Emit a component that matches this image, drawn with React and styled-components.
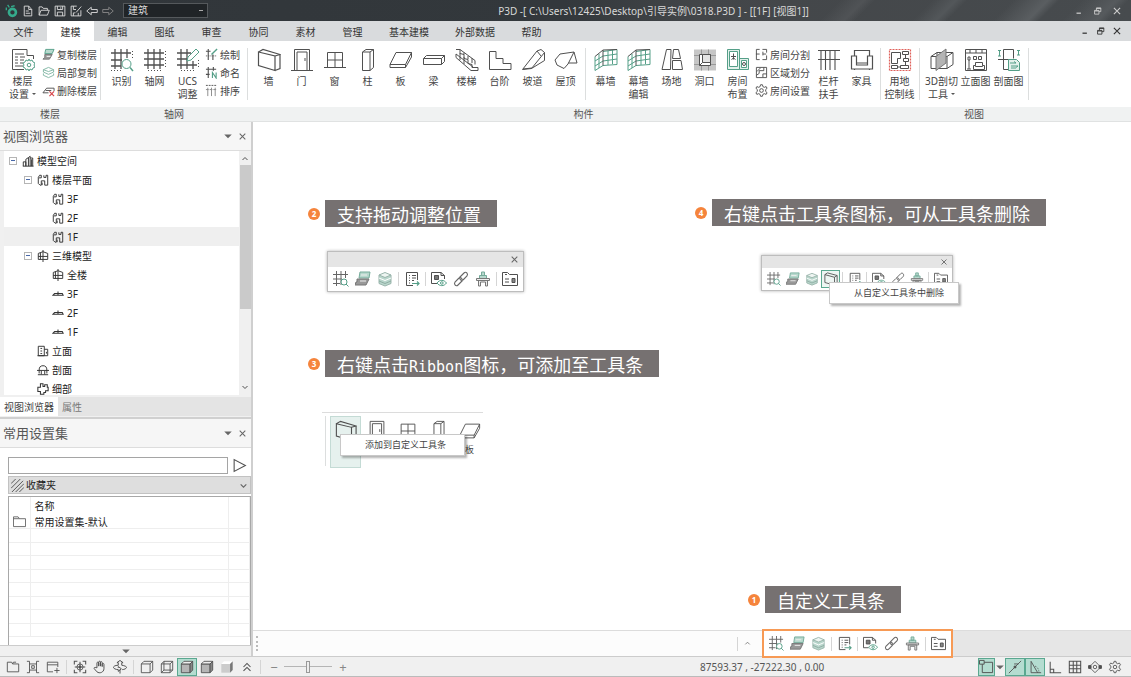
import React from 'react'
import styled, { createGlobalStyle, css } from 'styled-components'

const GlobalStyle = createGlobalStyle`
  * { box-sizing: border-box; }
  body {
    margin: 0;
    font-family: "Noto Sans", "Noto Sans CJK SC", sans-serif;
    font-size: 10px;
    color: #333;
  }
  button, input, select {
    font: inherit;
    color: inherit;
    margin: 0;
    padding: 0;
    border: 0;
    background: none;
    outline: none;
  }
`

const D = '#505050'
const G = '#559f88'

// 24 x 24 line drawings for the ribbon
const bigIcons = {
  floorSet: <><path d="M22.500 11V7.500H16V1.500H1.500v20H13" /><path d="M4 6h9M4 9h3M9 9h5M4 12h3M9 12h4M4 15h3M9 15h3M4 18h8" /><path stroke={G} d="M18 11l1 2 2-1 1 2 2 1-1 2 1 2-2 1-1 2-2-1-1 2-1-2-2 1-1-2-2-1 1-2-1-2 2-1 1-2 2 1z" /><circle stroke={G} cx="18" cy="17" r="1.800" /></>,
  identify: <><path d="M1 5h20M1 12h11M1 18h10M5 1v20M11 1v20M17 1v9" strokeWidth="1.300" /><path strokeDasharray="1 2" d="M22.500 3v8M1 22.500h11" /><circle stroke={G} cx="16.500" cy="16" r="4.500" fill="#fff" /><path stroke={G} strokeWidth="1.500" d="M20 19.500l3 3.500" /></>,
  axis: <><path d="M1 5h20M1 11h20M1 17h20M5 1v20M11 1v20M17 1v20" strokeWidth="1.300" /><path strokeDasharray="1 2" d="M5 22.500h14M22.500 3v16" /></>,
  ucs: <><path d="M1 5h14M1 11h11M1 17h20M5 1v20M11 1v20M17 13v8" strokeWidth="1.300" /><path strokeDasharray="1 2" d="M5 22.500h14M22.500 12v8" /><path stroke={G} fill="#fff" d="M11 13l1-4 8-8 3 3-8 8z" /></>,
  wall: <path d="M1.500 4L18 8v14.500L1.500 17.500zM1.500 4L6 1.500l17 5L18 8M23 6.500v14l-5 2" strokeWidth="1.200" />,
  door: <path d="M4.500 22V1.500h15V22M7 22V4h10v18M1 22.500h22M15 10v3" />,
  window: <path d="M4.500 4.500h15v15h-15zM12 4.500v15M4.500 12h15M1 19.500h22" />,
  column: <path d="M6.500 4H14v18.500H6.500zM6.500 4L10 1.500h7.500L14 4M17.500 1.500v18L14 22.500" />,
  slab: <path d="M7 4.500h15.500l-6 12H1zM1 16.500v3h15.500l6-10.500V4.500M16.500 16.500v3" />,
  beam: <path d="M1.500 10.500h18v6h-18zM1.500 10.500l3-3h18l-3 3M22.500 7.500v6l-3 3" />,
  stairs: <path d="M1 1.500h4v4l4 1v4l4 1v4l4 1v3h6v3h-7L1 9.500V6l17 13M5 5v7M9 9v7M5 1.500l15 11v4M9 6.500v-2M13 11V8M17 15v-5" />,
  steps: <path d="M1.500 3.500H8v7h7v5h8v6H1.500z" />,
  ramp: <path d="M1.500 21.500L16 3l4-1.500 3.500 3v8l-13 8zM10.500 20.500L23.500 4.500M2 21l9-1M16 3l4 5" />,
  roof: <path d="M1 12l5-6 14-2-6 12-4 4.500-7-3.500zM20 4l3 11h-8.500" />,
  curtain: <><path stroke={G} d="M1 8.500v14l8-5 14-1V1.500L9 3.500M1 13l8-5 14-2M1 18l8-5 14-2M5 6v14M14 3v14M18.500 2v14" /><path d="M1 8.500L9 2l14-.500M9 2v15.500" /></>,
  site: <path d="M2 21.500l4.500-20H11l-.500 20zM13.500 1.500h5l2 9h-8zM12.500 12.500H21l1.500 9h-10z" />,
  opening: <><path fill="#c6c6c6" stroke="none" d="M1 1.500h22v21H1z" /><path stroke="#999" d="M1 7.500h5M18 7.500h5M1 16.500h5M18 16.500h5M8.500 1.500v5M15.500 1.500v5M8.500 17.500v5M15.500 17.500v5" /><path fill="#fff" d="M6.500 6.500h11v11h-11z" /><path fill="#e4e4e4" d="M9.500 6.500h8v8h-8zM6.500 17.500l3-3" /></>,
  room: <><path stroke={G} fill="#e3f1ec" d="M1.500 1.500h12v20h-12zM13.500 10.500h9v11h-9z" /><path stroke={G} fill="#fff" d="M3.500 3.500h8v15h-8zM15.500 12.500h5v7h-5z" /><path d="M7.500 5.500v6M5 8.500h5M5.500 11.500l2-1.500 2 1.500" /><circle cx="18" cy="16" r="1.500" /></>,
  rail: <path d="M1 2.500h22M1 11.500h22M4 2v20M8.500 2v20M13 2v20M18 2v20" strokeWidth="1.100" />,
  sofa: <path d="M4.500 8V2.500h15V8M1.500 8h5v7h11V8h5v13h-21zM6.500 15v2h11v-2M4.500 21v1M19.500 21v1" strokeWidth="1.200" />,
  land: <><path stroke="#e0605a" strokeDasharray="2 1" strokeWidth="1.200" d="M1.500 1.500h21v21h-21z" /><path d="M3.500 4.500h9v6h-3v5h-6zM14.500 3.500h6v3h-6zM15.500 10.500h5v3h-5zM3.500 17.500h6v3h-6zM12.500 17.500h8v3h-8zM17.500 6.500v4M17.500 13.500v4M9.500 19h3" /></>,
  cut3d: <><path d="M1 8.500h16v12H1zM1 8.500l6-4h16l-6 4M23 4.500v12l-6 4M7 4.500v4" /><path fill="#b4b4b4" stroke="#777" d="M6 8.500L16 1v14L6 22.500z" /></>,
  elevation: <path d="M1.500 1.500h21v21h-21zM1.500 5h21M6 1.500V5M12 1.500V5M18 1.500V5M9.500 8.500h3v3h-3zM14.500 8.500h3v3h-3zM5 12v9M3 21h4M4 9h2v3H4zM9.500 21.500v-4h2v-3h7v3h2v4zM11.500 17.500v1h7v-1" />,
  section: <><path d="M6.500 21.500v-20h10v9M6.500 21.500h5M1 11.500h14" /><path stroke={G} d="M1 2.500h3M2.500 2.500V8M1 8h3M20 2.500h3M21.500 2.500V7M20 7h3" /><path stroke={G} fill="#e3f1ec" d="M11.500 11.500h8l3 3v8h-11z" /><path stroke={G} d="M13 15h6l-2-1.500M14 18h7l-2 1.500M14 20h5" /></>,
}

// 14 x 14 drawings
const smallIcons = {
  copyFloor: <><path fill="#b7d8cd" stroke={G} d="M4 1.500h9L11 6H3z" /><path fill="#999" stroke="#777" d="M3 7h8l-3 5H1l2-2z" /><path stroke="#fff" d="M5 9h4" /></>,
  copyPart: <path stroke="#7fb5a3" d="M1.500 4L7 1.500 12.500 4 7 6zM1.500 4v2.500L7 9l5.500-2.500V4M1.500 8v2L7 12.500l5.500-2.500V8" />,
  delFloor: <><path d="M5 4.500h8v3M5 4.500L1 9.500h6M4 7h6" /><path stroke="#d8484c" strokeWidth="1.300" d="M8 8l5 5M13 8l-5 5" /></>,
  drawAxis: <><path d="M1 3.500h5M3.500 1v12M8.500 7v6" strokeWidth="1.200" /><path strokeDasharray="1 1" d="M1 8.500h12" /><path stroke={G} strokeWidth="1.500" d="M7 7l6-6" /></>,
  nameAxis: <><path d="M1 3.500h11M1 9h4M3.500 1v12M9 1v4" strokeWidth="1.200" /><path stroke={G} strokeWidth="1.200" d="M8 13V7l4 6V7" /></>,
  sortAxis: <><path d="M1 1.500h12" strokeDasharray="2 1" /><path d="M3 4v9M7 4v9M11 4v9M1 6h3M5 6h3M9 6h3" stroke="#888" /></>,
  split: <path d="M5 1.500H1.500v11H5M8 1.500h4.500V5M12.500 8v4.500H8M1 6.500h4M8.500 4v4M8.500 6.500H12" />,
  region: <path d="M1.500 1.500h11v11h-11zM1.500 10l3-2V5h5V1.500M2 6l4-4M8.500 12V8.500h4" />,
  gear: <><path d="M6 .800h2l.500 2 1.500.800 2-.800 1 1.800-1.500 1.400v2L13 9.400l-1 1.800-2-.800-1.500.800-.500 2H6l-.500-2-1.500-.800-2 .800-1-1.800L2.500 8V6L1 4.600l1-1.800 2 .800 1.500-.800z" /><circle cx="7" cy="7" r="2" /></>,
  building: <path d="M1 13h12.500M1.500 13V8h3v5M4.500 13V5l3-2v10M7.500 3l2-1.500V13M9.500 3.500h3V13M11 5v8" strokeWidth="1.100" />,
  plan: <path d="M5 1.500H3L1.500 4v7l2 2H5V8h4v2.500M5 1.500v3H2M8 1.500v2.500h2.500V1.500h2V13H9v-2.500M6 13V10" strokeWidth="1.100" />,
  model: <path d="M7 0v14M1.500 4L7 2l5.500 2v7h-11zM1.500 7.500h11M4 3v8" strokeWidth="1.100" />,
  level: <path d="M1 8.500l2-2h9l1 2zM7 4v4" strokeWidth="1.200" />,
  elev: <path d="M1.500 12.500v-11h7v11zM8.500 5h4v7.500h-12M4 4h2M4 7h2M4 10h2M11 8v2" strokeWidth="1.100" />,
  sect: <path d="M2.500 7a4.500 5 0 0 1 9 0v4M2.500 7v4M0 7.500h14M1 12.500h12M5 8v4M9 8v4" strokeWidth="1.100" />,
  detail: <path d="M4 1h3v3h2V2h3v3h1v4h-3v2H8v2H4v-3H1V5h3z" strokeWidth="1.200" />,
  folder: <path d="M.500 12.500V2h5l1.500 2h6.500v8.500zM.500 4H7" />,
  hatch: <path d="M0 5l5-5M0 10L10 0M1 14L13 2M5 14l9-9M9 14l5-5" />,
  play: <path d="M2 1.500v11L12.500 7z" />,
}

// 16 x 16 drawings for tool strips and the status line
const barIcons = {
  gridFind: <><path stroke="#666" d="M0 3.500h15M0 8h9M0 12.500h7M3.500 0v15M8 0v14M12.500 0v7" /><circle stroke={G} cx="11" cy="11" r="3" fill="#fff" /><path stroke={G} d="M13 13l2.500 2.500" /></>,
  floors: <><path fill="#b7d8cd" stroke="#75ab9a" d="M5 1h10l-1 6H4z" /><path fill="#999" stroke="#777" d="M2 8h12l-3 6H0l1-3h1z" /><path stroke="#eee" d="M5 10h6M6 4h6" /></>,
  layers: <><path fill="#b9d6cc" stroke="#9ab5ac" d="M2 4v8.500l6 2.500 6-2.500V4z" /><path fill="#eef5f2" stroke="#9ab5ac" d="M2 4l6-2.500L14 4 8 6.500z" /><path stroke="#fff" d="M2 7l6 2.500L14 7" /><path stroke="#8fada3" d="M2 10l6 2.500 6-2.500" /></>,
  list: <><path d="M13.500 9V1.500h-11v13H9M5 4.500h1M8 4.500h4M5 7h1M8 7h4M5 9.500h1M8 9.500h2M5 12h1" /><path stroke={G} strokeWidth="1.200" d="M8 12.500h7M13 10.500l2 2-2 2" /></>,
  preview: <><path d="M6 12.500H.500v-11H10l3.500 3V8M10 1.500v3h3.500" /><path fill="#777" d="M3.500 4.500h4v4h-4z" /><path stroke={G} fill="#fff" d="M6 12c2.500-3.500 7-3.500 9.500 0-2.500 3.500-7 3.500-9.500 0z" /><circle cx="10.800" cy="12" r="1.300" stroke={G} /></>,
  link: <path stroke="#666" strokeWidth="1.100" d="M6.500 6.500L11 2c2-2 4.500.800 3 3L10.500 8.500C9 10 7 9.500 7 7.500M9.500 9.500L5 14c-2 2-4.500-.800-3-3l3.500-3.500C7 6 9 6.500 9 8.500" />,
  desk: <><path fill="#b7d8cd" stroke="#75ab9a" d="M4.500 4.500h7v3h-7zM6.500 1h3v3.500h-3z" /><path stroke="#777" fill="#eee" d="M1.500 7.500h13v2h-13zM3.500 9.500v5.500h2v-4h5v4h2V9.500z" /></>,
  card: <><path d="M.500 14.500v-13h5l2 2h8v11zM3 3.500h2" /><path d="M3 8h4M3 11h4" /><path fill="#888" d="M10 7.500h3v4h-3z" /></>,
  wall: <path d="M1 3l11 3v9L1 12zM1 3l3-2 11 3-3 2M15 4v9l-3 2" />,
  folder: <path d="M1.500 13.500v-11h5l1 2h7v9zM7.500 4.500l1-2h3" />,
  fit: <path d="M1 1.500h3v13H1M15 1.500h-3v13h3M4 4.500h8M4 11.500h8M6.500 6.500h3v3h-3z" />,
  windowAdd: <path d="M8 13.500H1.500v-11h12V8M1.500 5.500h12M12.500 9v6M9.500 12h6" />,
  zoomAll: <><path strokeWidth="1.200" d="M1.500 5V1.500H5M11 1.500h3.500V5M14.500 11v3.500H11M5 14.500H1.500V11M8 2v12M2 8h12" /><circle cx="8" cy="8" r="3.500" /><path fill={D} d="M7 7h2v2H7z" /></>,
  hand: <path strokeWidth="1.100" d="M4.500 9V3.500c0-1.500 2-1.500 2 0V7 2.500c0-1.500 2-1.500 2 0V7 3c0-1.500 2-1.500 2 0v4.500-2.500c0-1.500 2-1.500 2 0v5c0 4-5 6-8 3.500L1.500 10c-1-1.500 1-2 3-1" />,
  orbit: <path strokeWidth="1.100" d="M6 6V3H4.500L8 .500 11.500 3H10v3M6 6C2 6 .500 7.500.500 8.500S3 11 6 11v2l3.500-3L6 7.500V9M10 6c3.500.500 5.500 1.500 5.500 2.500S13 11 10.500 11M8 11v4.500" />,
  cube: <path d="M1.500 4.500h10v10h-10zM1.500 4.500l3-3h10l-3 3M14.500 1.500v10l-3 3" />,
  cubeWire: <path d="M1.500 4.500h10v10h-10zM1.500 4.500l3-3h10l-3 3M14.500 1.500v10l-3 3M4.500 1.500v10h10M4.500 11.500l-3 3" />,
  cubeSolid: <><path fill="#b5b5b5" d="M1.500 4.500h10v10h-10z" /><path fill="#eee" d="M1.500 4.500l3-3h10l-3 3z" /><path fill="#888" d="M14.500 1.500v10l-3 3v-10z" /></>,
  cubeSoft: <><path fill="#ccc" stroke="none" d="M1.500 4.500h10v10h-10z" /><path fill="#fff" stroke="none" d="M1.500 4.500l3-3h10l-3 3z" /><path fill="#777" stroke="none" d="M14.500 1.500v10l-3 3v-10z" /></>,
  up2: <path strokeWidth="1.200" d="M4 8l4-4 4 4M4 12.500l4-4 4 4" />,
  snapBox: <path d="M3.500 5.500v9h11v-11h-9M.500 1.500h5v4h-5z" />,
  snapLine: <><path d="M1 15L15 1" /><path fill={D} d="M7 7h2v2H7z" /><path d="M7 4.500h5" /></>,
  snapAngle: <><path d="M3.500 14.500V1.500l7.500 13M3.500 14.500H15" /><path strokeDasharray="1 1" d="M8 7c3 1 4.500 4 4.500 7" /></>,
  ortho: <path strokeWidth="1.200" d="M2.500 2v12.500H15M2.500 10.500h4v4" />,
  grid: <path strokeWidth="1.200" d="M1.500 1.500h13v13h-13zM1.500 6h13M1.500 10h13M6 1.500v13M10 1.500v13" />,
  target: <><circle cx="8" cy="8" r="2" /><path d="M4 5.500L8 1.500l4 4M4 10.500l4 4 4-4" /><path fill={D} d="M3.500 6v4L.500 9.500v-3zM12.500 6v4l3-.500v-3z" /></>,
  gear: <><path d="M7 1.500h2l.500 2 1.500.800 2-.800 1.300 2-1.500 1.500v2l1.500 1.500-1.300 2-2-.800-1.500.800-.500 2H7l-.500-2L5 11.700l-2 .800-1.300-2L3.200 9V7L1.700 5.500 3 3.500l2 .800 1.500-.800z" /><circle cx="8" cy="8" r="2" /></>,
  file: <path strokeWidth="1.200" d="M13 6v8.500H3v-13h6L13 6H9V1.500M5 8h4M5 11h6" />,
  open: <path strokeWidth="1.200" d="M1.500 13.500v-11h4l1.500 2h5.500V7M1.500 13.500L4 7h11l-2.500 6.500z" />,
  save: <path strokeWidth="1.200" d="M1.500 1.500h13v13h-13zM4.500 1.500V6h7V1.500M4.500 14.500v-5h7v5M9 3v2" />,
  saveAs: <path strokeWidth="1.200" d="M14.500 7v7.500h-13v-13H9M4.500 1.500V6H8M4.500 14.500v-4H7M8 10l7-8M11 14.500v-4" />,
  back: <path strokeWidth="1.200" d="M1 8l6-5v3h8v4H7v3z" />,
  forward: <path strokeWidth="1.200" d="M15 8L9 3v3H1v4h8v3z" />,
  logo: <><circle cx="8.500" cy="9.500" r="4" strokeWidth="3" stroke="#35ab8c" /><path stroke="#35ab8c" strokeWidth="1.500" d="M3 1l2 3M7 3l4-1M1.500 4v3" /></>,
  min: <path strokeWidth="2" d="M4 11.500h7" />,
  restore: <path strokeWidth="1.400" d="M2.500 7h7v6h-7zM5.500 7V3h7v6h-3M2.500 8h7M5.500 4h7" />,
  close: <path strokeWidth="1.800" d="M3 3l10 10M13 3L3 13" />,
  caret: <path fill="#666" stroke="none" d="M2 5.500h12l-6 6z" />,
  chevUp: <path strokeWidth="2" d="M3 10l5-5 5 5" />,
  chevDown: <path strokeWidth="2" d="M3 6l5 5 5-5" />,
}

const Svg = styled.svg`
  display: block;
  flex: none;
  fill: none;
  stroke: ${p => p.$color || D};
`

const Icon = ({ set, box, name, size, color }) => (
  <Svg width={size} height={size} viewBox={`0 0 ${box} ${box}`} $color={color} aria-hidden="true">{set[name]}</Svg>
)
const BigIcon = ({ size = 24, ...rest }) => <Icon set={bigIcons} box={24} size={size} {...rest} />
const SmallIcon = ({ size = 13, ...rest }) => <Icon set={smallIcons} box={14} size={size} {...rest} />
const BarIcon = ({ size = 15, ...rest }) => <Icon set={barIcons} box={16} size={size} {...rest} />

const Page = styled.div`
  display: flex;
  flex-direction: column;
  height: 100vh;
  min-height: 600px;
  background: #fff;
  overflow: hidden;
`

/* ---------- title bar ---------- */
const TitleBar = styled.header`
  display: flex;
  align-items: center;
  flex: none;
  height: 21px;
  padding: 0 4px;
  color: #d8d8d8;
  background:
    linear-gradient(135deg, transparent 73%, #505356 75%, transparent 76%, transparent 81%, #53575a 83%, transparent 84%, transparent 88%, #5a5e61 91%, transparent 92%, transparent 94%, #565a5d 97%, transparent 98%),
    linear-gradient(90deg, #31363a 0%, #33383c 50%, #434649 62%, #474b4e 100%);
`

const QuickButton = styled.button`
  display: flex;
  justify-content: center;
  width: 16px;
`

const StyleSelect = styled.select`
  appearance: none;
  width: 85px;
  height: 15px;
  margin-left: 7px;
  padding: 0 4px;
  border: 1px solid #55595c;
  background: linear-gradient(#aaa, #aaa) no-repeat right 4px center / 4px 1px #202427;
  line-height: 13px;
`

const TitleText = styled.div`
  flex: 1;
  padding-left: 26px;
  text-align: center;
  white-space: nowrap;
`

const WindowButtons = styled.div`
  display: flex;
  gap: ${p => p.$gap}px;
  padding-right: 4px;
`

const WindowButton = styled.button`
  display: flex;
  align-items: center;
  justify-content: center;
  width: 12px;
  height: 16px;
`

/* ---------- ribbon ---------- */
const TabRow = styled.nav`
  display: flex;
  justify-content: space-between;
  align-items: center;
  flex: none;
  height: 20px;
  padding-right: 4px;
  background: #d9dbdd;
`

const Tabs = styled.div`
  display: flex;
  height: 100%;
`

const Tab = styled.button`
  width: ${p => (p.$long ? 66 : 47)}px;
  background: ${p => (p.$active ? '#fff' : 'transparent')};
`

const Ribbon = styled.div`
  display: flex;
  flex: none;
  border-bottom: 1px solid #e0e2e2;
  background: linear-gradient(#fff 66px, #f0f2f2 66px);
`

const Group = styled.section`
  display: flex;
  flex-direction: column;
`

const GroupBody = styled.div`
  display: flex;
  height: 66px;
  padding: 0 3px 0 4px;
  white-space: nowrap;
`

const GroupLabel = styled.div`
  height: 14px;
  color: #555;
  line-height: 14px;
  text-align: center;
`

const Divider = styled.span`
  flex: none;
  width: 1px;
  height: 52px;
  margin: 7px ${p => p.$gap || 0}px 0;
  background: #dcdede;
`

const BigButton = styled.button`
  display: flex;
  flex-direction: column;
  align-items: center;
  gap: 3px;
  width: ${p => p.$width || 33}px;
  padding-top: 7px;
  color: #444;
  line-height: 13px;
  white-space: pre;
`

const DropMark = styled.span`
  display: inline-block;
  margin-left: 3px;
  border: 2px solid transparent;
  border-top-color: #555;
  vertical-align: middle;
`

const SmallColumn = styled.div`
  display: flex;
  flex-direction: column;
  padding: 4px ${p => p.$after || 0}px 0 1px;
`

const SmallButton = styled.button`
  display: flex;
  align-items: center;
  gap: 2px;
  height: 18px;
  color: #444;
`

/* ---------- docked panels ---------- */
const Body = styled.div`
  display: flex;
  flex: 1;
  min-height: 0;
`

const Side = styled.aside`
  display: flex;
  flex-direction: column;
  flex: none;
  width: 253px;
  background: #f0f0f0;
  border-right: 2px solid #cfcfcf;
`

const PanelHead = styled.div`
  display: flex;
  align-items: center;
  flex: none;
  height: 29px;
  padding: 0 1px 0 3px;
  border-bottom: 1px solid #ddd;
  background: #f6f6f6;
`

const PanelTitle = styled.h2`
  flex: 1;
  margin: 0;
  font-size: 13px;
  font-weight: 400;
  line-height: 18px;
  color: #555;
`

const PanelButton = styled.button`
  display: flex;
  justify-content: center;
  width: 15px;
`

const TreeBox = styled.div`
  display: flex;
  flex: none;
  height: 244px;
  padding-left: 4px;
`

const Tree = styled.div`
  flex: 1;
  overflow: hidden;
  background: #fff;
`

const TreeRow = styled.div`
  display: flex;
  align-items: center;
  gap: 3px;
  height: 19px;
  padding-left: ${p => 5 + p.$level * 15}px;
  background: ${p => (p.$selected ? '#efefef' : 'transparent')};
  color: #222;
`

const Toggle = styled.span`
  display: flex;
  align-items: center;
  justify-content: center;
  width: 8px;
  height: 8px;
  margin-right: 2px;
  border: 1px solid ${p => (p.$shown ? '#b5b5b5' : 'transparent')};
  &::after {
    content: '';
    width: 4px;
    height: 1px;
    background: ${p => (p.$shown ? '#4868a8' : 'transparent')};
  }
`

const ScrollBar = styled.div`
  display: flex;
  flex-direction: column;
  justify-content: space-between;
  align-items: center;
  width: 12px;
  padding: 4px 0;
  background: #f0f0f0;
`

const ScrollThumb = styled.div`
  width: 11px;
  height: 144px;
  margin: 2px 0 auto;
  background: #cacaca;
`

const PanelTabs = styled.div`
  display: flex;
  flex: none;
  height: 19px;
  margin: 2px 0 1px;
  background: #e4e4e4;
`

const PanelTab = styled.button`
  padding: 0 4px;
  background: ${p => (p.$active ? '#fff' : 'transparent')};
  color: ${p => (p.$active ? '#444' : '#777')};
`

const SetPanel = styled.section`
  display: flex;
  flex-direction: column;
  flex: 1;
  min-height: 0;
  border-top: 2px solid #d0d0d0;
`

const SetBody = styled.div`
  display: flex;
  flex-direction: column;
  flex: 1;
  min-height: 0;
  gap: 2px;
  padding: 9px 0 0 8px;
  background: #fff;
`

const SearchRow = styled.div`
  display: flex;
  align-items: center;
  gap: 4px;
`

const SearchInput = styled.input`
  width: 220px;
  height: 17px;
  padding: 0 4px;
  border: 1px solid #a5a5a5;
  background: #fff;
`

const FavRow = styled.label`
  display: flex;
  align-items: center;
  flex: none;
  gap: 2px;
  height: 18px;
  padding: 0 2px;
  border: 1px solid #c2c2c2;
  background: #dedede;
`

const FavSelect = styled.select`
  appearance: none;
  flex: 1;
  color: #222;
  line-height: 14px;
`

const TableWrap = styled.div`
  flex: 1;
  min-height: 0;
  overflow: hidden;
  border: 1px solid #a8a8a8;
  border-bottom: 0;
`

const SetTable = styled.table`
  width: 100%;
  border-collapse: collapse;
  table-layout: fixed;
  color: #222;
  th, td {
    height: 13px;
    padding: 0 4px;
    border-right: 1px solid #eee;
    border-bottom: 1px solid #eee;
    font-weight: 400;
    line-height: 12px;
    text-align: left;
  }
  th { height: 18px; border-bottom: 0; }
  tr:nth-child(even) td { height: 14px; }
`

const FoldStrip = styled.button`
  display: flex;
  align-items: center;
  justify-content: center;
  flex: none;
  height: 11px;
  border-top: 1px solid #ccc;
`

/* ---------- drawing area ---------- */
const Main = styled.main`
  display: flex;
  flex-direction: column;
  flex: 1;
  min-width: 0;
`

const Canvas = styled.div`
  position: relative;
  flex: 1;
  overflow: hidden;
`

const Placed = styled.div`
  position: absolute;
  left: ${p => p.$x}px;
  top: ${p => p.$y}px;
`

const Note = styled.div`
  display: flex;
  align-items: center;
  gap: 5px;
`

const NoteBadge = styled.span`
  display: flex;
  align-items: center;
  justify-content: center;
  width: 12px;
  height: 12px;
  border-radius: 50%;
  background: #f5843c;
  color: #fff;
  font-size: 8px;
  font-weight: 700;
  line-height: 12px;
`

const NoteText = styled.div`
  height: 27px;
  padding: 0 16px 0 12px;
  background: #767171;
  color: #fff;
  font-family: "Noto Sans CJK SC", sans-serif;
  font-size: 18px;
  line-height: 28px;
  white-space: nowrap;
`

const Latin = styled.span`
  font-family: "DejaVu Sans Mono", monospace;
  font-size: 15px;
`

const Floating = styled.div`
  border: 1px solid #bdbdbd;
  background: #fff;
  box-shadow: 0 0 3px rgba(0, 0, 0, 0.3);
`

const FloatingHead = styled.div`
  display: flex;
  align-items: center;
  justify-content: flex-end;
  height: ${p => p.$height}px;
  padding-right: 4px;
  background: #e5e5e5;
`

const Strip = styled.div`
  display: flex;
  align-items: center;
  height: ${p => p.$height || 24}px;
  padding: 0 2px;
`

const ToolButton = styled.button`
  display: flex;
  align-items: center;
  justify-content: center;
  width: ${p => p.$width || 20}px;
  height: 18px;
  ${p => p.$active && css`
    background: ${p.$plain ? '#eef6f3' : '#b4dcd0'};
    box-shadow: inset 0 0 0 1px #5aa890;
  `}
`

const ToolGap = styled.span`
  flex: none;
  width: 1px;
  height: 14px;
  margin: 0 ${p => p.$gap || 2}px;
  background: #d5d5d5;
`

const Menu = styled.button`
  position: absolute;
  left: ${p => p.$x}px;
  top: ${p => p.$y}px;
  width: ${p => p.$width}px;
  height: 22px;
  padding-left: 24px;
  border: 1px solid #c8c8c8;
  background: #fff;
  box-shadow: 2px 2px 2px rgba(0, 0, 0, 0.3);
  color: #444;
  font-size: 9px;
  line-height: 18px;
  text-align: left;
  white-space: nowrap;
`

const Sample = styled.div`
  display: flex;
  width: 161px;
  padding: 3px 0 0 3px;
  border-top: 1px solid #dcdcdc;
`

const SampleEdge = styled.span`
  flex: none;
  width: 1px;
  height: 50px;
  margin-right: 4px;
  background: #dcdede;
`

const SampleButton = styled.button`
  display: flex;
  flex-direction: column;
  align-items: center;
  gap: 2px;
  flex: none;
  width: 31px;
  height: 52px;
  padding-top: 3px;
  border: 1px solid ${p => (p.$active ? '#c4dbd5' : 'transparent')};
  background: ${p => (p.$active ? '#e6f1ee' : 'transparent')};
  color: #444;
  font-size: 9px;
  line-height: 12px;
`

const DockBar = styled.div`
  display: flex;
  align-items: center;
  flex: none;
  height: 26px;
  border-top: 1px solid #dcdcdc;
  background: #fcfcfc;
`

const Grip = styled.span`
  height: 15px;
  margin: 0 auto 0 3px;
  border-left: 2px dotted #bbb;
`

const DockBox = styled.div`
  position: relative;
  z-index: 1;
  margin-left: 9px;
  background: #fff;
  outline: 2px solid #f79a55;
`

const DockRest = styled.div`
  width: 180px;
  height: 100%;
  background: #e6e6e6;
`

/* ---------- status line ---------- */
const StatusBar = styled.footer`
  display: flex;
  align-items: center;
  flex: none;
  height: 21px;
  padding: 0 6px 0 3px;
  border-top: 1px solid #ccc;
  border-bottom: 1px solid #bbb;
  background: #f0f0f0;
`

const ZoomSign = styled.button`
  width: 20px;
  color: #888;
  font-size: 13px;
  line-height: 16px;
`

const ZoomSlider = styled.input`
  appearance: none;
  width: 48px;
  height: 12px;
  margin-right: 1px;
  background: linear-gradient(#b5b5b5, #b5b5b5) no-repeat center / 100% 1px;
  &::-webkit-slider-thumb {
    appearance: none;
    width: 4px;
    height: 12px;
    border: 1px solid #999;
    background: #eee;
  }
`

const Coords = styled.div`
  width: 278px;
  margin-left: auto;
  color: #555;
  white-space: nowrap;
`

const ribbonTabs = ['文件', '建模', '编辑', '图纸', '审查', '协同', '素材', '管理', '基本建模', '外部数据', '帮助']

const partTools = [
  ['wall', '墙'], ['door', '门'], ['window', '窗'], ['column', '柱'], ['slab', '板'],
  ['beam', '梁'], ['stairs', '楼梯'], ['steps', '台阶'], ['ramp', '坡道'], ['roof', '屋顶'],
]

const roomTools = [
  ['curtain', '幕墙'], ['curtain', '幕墙\n编辑'], ['site', '场地'], ['opening', '洞口'], ['room', '房间\n布置'],
]

// only the last label sticks out from under the menu
const sampleTools = [['wall'], ['door'], ['window'], ['column'], ['slab', '板']]

const treeRows = [
  { level: 0, icon: 'building', text: '模型空间', open: true },
  { level: 1, icon: 'plan', text: '楼层平面', open: true },
  { level: 2, icon: 'plan', text: '3F' },
  { level: 2, icon: 'plan', text: '2F' },
  { level: 2, icon: 'plan', text: '1F', selected: true },
  { level: 1, icon: 'model', text: '三维模型', open: true },
  { level: 2, icon: 'model', text: '全楼' },
  { level: 2, icon: 'level', text: '3F' },
  { level: 2, icon: 'level', text: '2F' },
  { level: 2, icon: 'level', text: '1F' },
  { level: 1, icon: 'elev', text: '立面' },
  { level: 1, icon: 'sect', text: '剖面' },
  { level: 1, icon: 'detail', text: '细部' },
]

const stripTools = ['gridFind', 'floors', 'layers', '|', 'list', '|', 'preview', 'link', 'desk', '|', 'card']
const stripToolsWall = ['gridFind', 'floors', 'layers', 'wall', '|', 'list', '|', 'preview', 'link', 'desk', '|', 'card']

const viewTools = ['folder', 'fit', 'windowAdd', '|', 'zoomAll', 'hand', 'orbit', '|', 'cube', 'cubeWire', 'cubeSolid', 'cubeSolid2', 'cubeSoft', 'up2']

const Big = ({ icon, text, width, drop }) => (
  <BigButton $width={width}><BigIcon name={icon} /><span>{text}{drop && <DropMark />}</span></BigButton>
)

const Smalls = ({ items, after }) => (
  <SmallColumn $after={after}>
    {items.map(([icon, text]) => <SmallButton key={icon}><SmallIcon name={icon} />{text}</SmallButton>)}
  </SmallColumn>
)

const ToolStrip = ({ tools, width, size, height }) => (
  <Strip $height={height}>
    {tools.map((t, i) => t === '|'
      ? <ToolGap key={i} />
      : <ToolButton key={i} aria-label={t} $width={width} $active={t === 'wall'} $plain><BarIcon name={t} size={size} /></ToolButton>)}
  </Strip>
)

const Callout = ({ x, y, number, children }) => (
  <Placed $x={x} $y={y}>
    <Note><NoteBadge>{number}</NoteBadge><NoteText>{children}</NoteText></Note>
  </Placed>
)

const Windowing = ({ gap, color }) => (
  <WindowButtons $gap={gap}>
    {['min', 'restore', 'close'].map(n => (
      <WindowButton key={n} aria-label={n}><BarIcon name={n} size={10} color={color} /></WindowButton>
    ))}
  </WindowButtons>
)

const PanelHeader = ({ title }) => (
  <PanelHead>
    <PanelTitle>{title}</PanelTitle>
    <PanelButton aria-label="menu"><BarIcon name="caret" size={10} /></PanelButton>
    <PanelButton aria-label="close"><BarIcon name="close" size={9} color="#666" /></PanelButton>
  </PanelHead>
)

const App = () => {
  const [tab, setTab] = React.useState('建模')
  const [zoom, setZoom] = React.useState(50)

  return (
    <Page>
      <GlobalStyle />
      <TitleBar>
        {['logo', 'file', 'open', 'save', 'saveAs', 'back', 'forward'].map(n => (
          <QuickButton key={n} aria-label={n}>
            <BarIcon name={n} size={n === 'logo' ? 14 : 12} color={n === 'forward' ? '#888' : '#ddd'} />
          </QuickButton>
        ))}
        <StyleSelect aria-label="专业"><option>建筑</option></StyleSelect>
        <TitleText>P3D -[ C:\Users\12425\Desktop\引导实例\0318.P3D ] - [[1F] [视图1]]</TitleText>
        <Windowing gap={7} color="#ccc" />
      </TitleBar>

      <TabRow>
        <Tabs>
          {ribbonTabs.map(t => (
            <Tab key={t} $long={t.length > 2} $active={t === tab} onClick={() => setTab(t)}>{t}</Tab>
          ))}
        </Tabs>
        <Windowing gap={4} color="#333" />
      </TabRow>

      <Ribbon>
        <Group>
          <GroupBody>
            <Big icon="floorSet" text={'楼层\n设置'} width={37} drop />
            <Smalls items={[['copyFloor', '复制楼层'], ['copyPart', '局部复制'], ['delFloor', '删除楼层']]} />
          </GroupBody>
          <GroupLabel>楼层</GroupLabel>
        </Group>
        <Divider />
        <Group>
          <GroupBody>
            <Big icon="identify" text="识别" />
            <Big icon="axis" text="轴网" />
            <Big icon="ucs" text={'UCS\n调整'} />
            <Smalls after={4} items={[['drawAxis', '绘制'], ['nameAxis', '命名'], ['sortAxis', '排序']]} />
          </GroupBody>
          <GroupLabel>轴网</GroupLabel>
        </Group>
        <Divider />
        <Group>
          <GroupBody>
            {partTools.map(([icon, text]) => <Big key={icon} icon={icon} text={text} />)}
            <Divider $gap={3} />
            {roomTools.map(([icon, text]) => <Big key={text} icon={icon} text={text} />)}
            <Smalls after={2} items={[['split', '房间分割'], ['region', '区域划分'], ['gear', '房间设置']]} />
            <Big icon="rail" text={'栏杆\n扶手'} />
            <Big icon="sofa" text="家具" />
            <Divider $gap={2} />
            <Big icon="land" text={'用地\n控制线'} />
          </GroupBody>
          <GroupLabel>构件</GroupLabel>
        </Group>
        <Divider />
        <Group>
          <GroupBody>
            <Big icon="cut3d" text={'3D剖切\n工具'} width={35} drop />
            <Big icon="elevation" text="立面图" />
            <Big icon="section" text="剖面图" />
          </GroupBody>
          <GroupLabel>视图</GroupLabel>
        </Group>
        <Divider />
      </Ribbon>

      <Body>
        <Side>
          <PanelHeader title="视图浏览器" />
          <TreeBox>
            <Tree>
              {treeRows.map((r, i) => (
                <TreeRow key={i} $level={r.level} $selected={r.selected}>
                  <Toggle $shown={r.open} />
                  <SmallIcon name={r.icon} size={12} color="#333" />
                  {r.text}
                </TreeRow>
              ))}
            </Tree>
            <ScrollBar>
              <BarIcon name="chevUp" size={8} />
              <ScrollThumb />
              <BarIcon name="chevDown" size={8} />
            </ScrollBar>
          </TreeBox>
          <PanelTabs>
            <PanelTab $active>视图浏览器</PanelTab>
            <PanelTab>属性</PanelTab>
          </PanelTabs>
          <SetPanel>
            <PanelHeader title="常用设置集" />
            <SetBody>
              <SearchRow>
                <SearchInput aria-label="搜索" />
                <PanelButton aria-label="运行"><SmallIcon name="play" size={15} /></PanelButton>
              </SearchRow>
              <FavRow>
                <SmallIcon name="hatch" />
                <FavSelect aria-label="收藏夹"><option>收藏夹</option></FavSelect>
                <BarIcon name="chevDown" size={9} color="#666" />
              </FavRow>
              <TableWrap>
                <SetTable>
                  <colgroup><col width="21" /><col /><col width="21" /></colgroup>
                  <thead><tr><th /><th>名称</th><th /></tr></thead>
                  <tbody>
                    <tr><td><SmallIcon name="folder" color="#666" /></td><td>常用设置集-默认</td><td /></tr>
                    {[1, 2, 3, 4, 5, 6, 7, 8].map(n => <tr key={n}><td /><td /><td /></tr>)}
                  </tbody>
                </SetTable>
              </TableWrap>
            </SetBody>
          </SetPanel>
          <FoldStrip aria-label="展开"><BarIcon name="caret" size={10} /></FoldStrip>
        </Side>

        <Main>
          <Canvas>
            <Callout x={55} y={78} number="2">支持拖动调整位置</Callout>
            <Callout x={442} y={77} number="4">右键点击工具条图标，可从工具条删除</Callout>
            <Callout x={55} y={228} number="3">右键点击<Latin>Ribbon</Latin>图标，可添加至工具条</Callout>
            <Callout x={495} y={464} number="1">自定义工具条</Callout>

            <Placed $x={74} $y={129}>
              <Floating>
                <FloatingHead $height={15}><BarIcon name="close" size={9} color="#666" /></FloatingHead>
                <ToolStrip tools={stripTools} width={22} size={16} />
              </Floating>
            </Placed>

            <Placed $x={508} $y={133}>
              <Floating>
                <FloatingHead $height={12}><BarIcon name="close" size={8} color="#666" /></FloatingHead>
                <ToolStrip tools={stripToolsWall} width={19} size={14} height={22} />
              </Floating>
              <Menu $x={68} $y={27} $width={130}>从自定义工具条中删除</Menu>
            </Placed>

            <Placed $x={69} $y={290}>
              <Sample>
                <SampleEdge />
                {sampleTools.map(([icon, text]) => (
                  <SampleButton key={icon} aria-label={icon} $active={icon === 'wall'}><BigIcon name={icon} size={22} />{text}</SampleButton>
                ))}
              </Sample>
              <Menu $x={18} $y={22} $width={125}>添加到自定义工具条</Menu>
            </Placed>
          </Canvas>

          <DockBar>
            <Grip />
            <ToolGap />
            <PanelButton aria-label="收起"><BarIcon name="chevUp" size={7} color="#777" /></PanelButton>
            <DockBox><ToolStrip tools={stripTools} width={21} height={25} /></DockBox>
            <DockRest />
          </DockBar>
        </Main>
      </Body>

      <StatusBar>
        {viewTools.map((t, i) => t === '|'
          ? <ToolGap key={i} $gap={3} />
          : (
            <ToolButton key={i} aria-label={t} $active={t === 'cubeSolid'}>
              <BarIcon name={t === 'cubeSolid2' ? 'cubeSolid' : t} size={14} />
            </ToolButton>
          ))}
        <ToolGap $gap={3} />
        <ZoomSign aria-label="缩小">−</ZoomSign>
        <ZoomSlider type="range" aria-label="缩放" value={zoom} onChange={e => setZoom(e.target.value)} />
        <ZoomSign aria-label="放大">+</ZoomSign>
        <Coords>87593.37 , -27222.30 , 0.00</Coords>
        <ToolButton aria-label="snapBox" $active $width={17}><BarIcon name="snapBox" /></ToolButton>
        <ToolButton aria-label="more" $width={10}><BarIcon name="caret" size={10} /></ToolButton>
        {['snapLine', 'snapAngle', 'ortho', 'grid', 'target', 'gear'].map((t, i) => (
          <ToolButton key={t} aria-label={t} $active={i < 2}><BarIcon name={t} size={14} /></ToolButton>
        ))}
      </StatusBar>
    </Page>
  )
}

export default App
